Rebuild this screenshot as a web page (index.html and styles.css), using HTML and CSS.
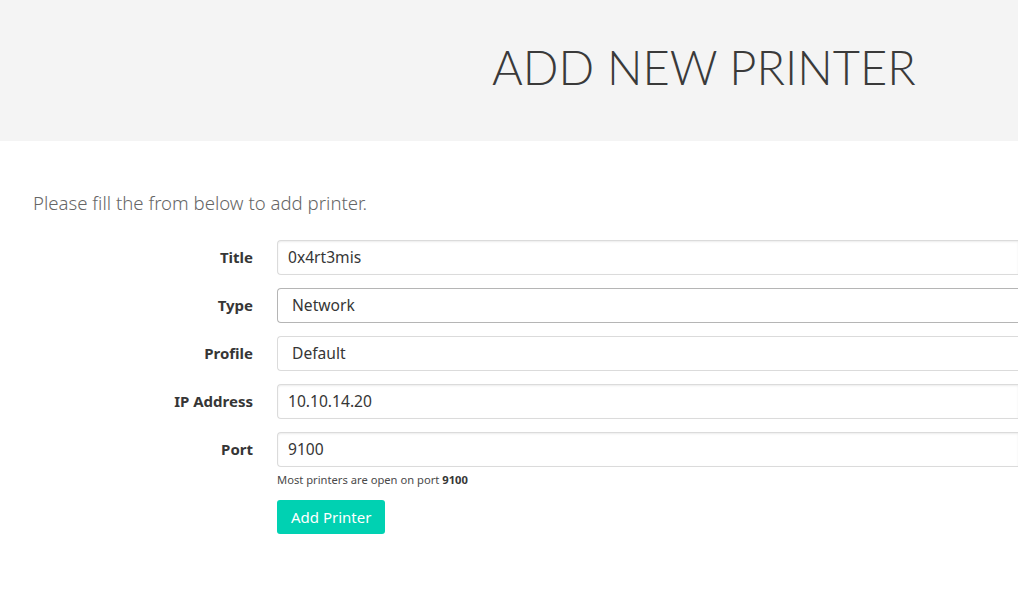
FILE: index.html
```html
<!DOCTYPE html>
<html>
<head>
<meta charset="utf-8">
<link rel="stylesheet" href="styles.css">
</head>
<body>
<header class="hero">
  <h1 class="title">ADD NEW PRINTER</h1>
</header>
<main class="section">
  <p class="intro">Please fill the from below to add printer.</p>
  <form class="form">
    <div class="row">
      <label class="label">Title</label>
      <div class="field"><div class="input">0x4rt3mis</div></div>
    </div>
    <div class="row">
      <label class="label">Type</label>
      <div class="field"><div class="input select dark">Network</div></div>
    </div>
    <div class="row">
      <label class="label">Profile</label>
      <div class="field"><div class="input select">Default</div></div>
    </div>
    <div class="row">
      <label class="label">IP Address</label>
      <div class="field"><div class="input">10.10.14.20</div></div>
    </div>
    <div class="row">
      <label class="label">Port</label>
      <div class="field">
        <div class="input">9100</div>
        <p class="help">Most printers are open on port <b>9100</b></p>
      </div>
    </div>
    <div class="row">
      <span class="label"></span>
      <div class="field"><button type="button" class="button">Add Printer</button></div>
    </div>
  </form>
</main>
</body>
</html>
```
FILE: styles.css
```css
html, body { margin: 0; padding: 0; }
body {
  font-family: "Noto Sans", "Open Sans", sans-serif;
  color: #4a4a4a;
  background: #fff;
  overflow: hidden;
}
.hero {
  background: #f4f4f4;
  height: 141px;
  display: flex;
  align-items: center;
  padding-left: 492px;
  box-sizing: border-box;
}
.title {
  margin: 0;
  font-family: "Lato", sans-serif;
  font-weight: 300;
  font-size: 47px;
  letter-spacing: 0;
  color: #3a3a3a;
  white-space: nowrap;
  position: relative;
  top: -4px;
}
.section { padding: 48px 0 0 33px; }
.intro {
  margin: 0 0 23px 0;
  font-size: 18.6px;
  font-weight: 300;
  color: #666;
  line-height: 28px;
}
.form { display: flex; flex-direction: column; gap: 13px; }
.row { display: flex; align-items: flex-start; }
.label {
  flex: 0 0 220px;
  text-align: right;
  font-weight: 700;
  font-size: 15px;
  color: #363636;
  line-height: 35px;
  margin-right: 24px;
}
.field { flex: 1 1 auto; min-width: 0; }
.input {
  box-sizing: border-box;
  height: 35px;
  border: 1px solid #dbdbdb;
  border-right: none;
  border-radius: 4px 0 0 4px;
  box-shadow: inset 0 1px 2px rgba(10,10,10,0.08);
  padding: 0 10px;
  font-size: 15.6px;
  line-height: 33px;
  color: #363636;
  background: #fff;
}
.select { padding-left: 14px; box-shadow: none; }
.dark { border-color: #b5b5b5; }
.help {
  margin: 5px 0 0 0;
  font-size: 11.2px;
  color: #4a4a4a;
}
.help b { color: #363636; }
.button {
  background: #00d1b2;
  color: #fff;
  border: none;
  border-radius: 3px;
  height: 34px;
  padding: 0 14px;
  font-family: "Noto Sans", sans-serif;
  font-size: 15px;
}
```
